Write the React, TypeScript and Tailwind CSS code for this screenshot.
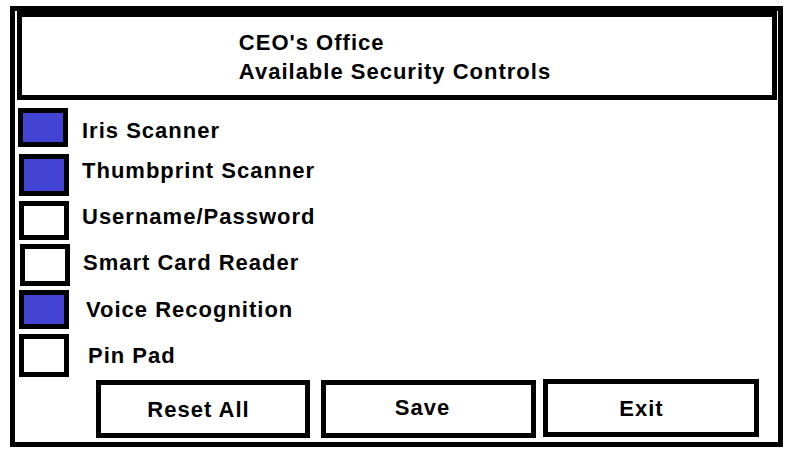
import React from "react";

const font = { fontFamily: '"Liberation Sans", Arial, Helvetica, sans-serif' };

type Row = { label: string; checked: boolean; h: string; mt: string; ml: string; lx: string; lpad: string };

const rows: Row[] = [
  { label: "Iris Scanner", checked: true, h: "h-[39px]", mt: "mt-[8px]", ml: "ml-[3px]", lx: "ml-[14px]", lpad: "pt-[7px]" },
  { label: "Thumbprint Scanner", checked: true, h: "h-[42px]", mt: "mt-[7px]", ml: "ml-[4px]", lx: "ml-[13px]", lpad: "pb-[8px]" },
  { label: "Username/Password", checked: false, h: "h-[39px]", mt: "mt-[5px]", ml: "ml-[4px]", lx: "ml-[13px]", lpad: "pb-[7px]" },
  { label: "Smart Card Reader", checked: false, h: "h-[42px]", mt: "mt-[4px]", ml: "ml-[5px]", lx: "ml-[13px]", lpad: "pb-[4px]" },
  { label: "Voice Recognition", checked: true, h: "h-[39px]", mt: "mt-[4px]", ml: "ml-[4px]", lx: "ml-[17px]", lpad: "pb-[0px]" },
  { label: "Pin Pad", checked: false, h: "h-[43px]", mt: "mt-[5px]", ml: "ml-[4px]", lx: "ml-[19px]", lpad: "pb-[0px]" },
];

export default function App() {
  return (
    <div className="w-[792px] h-[453px] bg-white pt-[6px] pl-[10px] text-black" style={font}>
      <div className="w-[773px] h-[441px] border-[5px] border-black box-border flex flex-col">
        <div className="ml-[2px] mr-[1px] h-[89px] border-[5px] border-t-[6px] border-black flex items-center justify-center">
          <div className="text-[22px] font-bold tracking-[1px] leading-[29px] mt-[1px] mr-[4px]">
            <div>CEO's Office</div>
            <div>Available Security Controls</div>
          </div>
        </div>
        {rows.map((r) => (
          <div key={r.label} className={`flex items-center ${r.mt}`}>
            <div
              className={`${r.ml} ${r.h} w-[50px] border-[5px] border-black ${r.checked ? "bg-[#4444d4]" : "bg-white"}`}
            />
            <div className={`${r.lx} ${r.lpad} text-[22px] font-bold tracking-[1px] leading-[26px]`}>{r.label}</div>
          </div>
        ))}
        <div className="flex mt-[3px] ml-[81px]">
          <div className="w-[214px] h-[58px] border-[5px] border-black flex items-center justify-center pr-[9px] text-[22px] font-bold tracking-[1px]">
            Reset All
          </div>
          <div className="ml-[11px] w-[215px] h-[58px] border-[5px] border-black flex items-center justify-center pr-[12px] pb-[4px] text-[22px] font-bold tracking-[1px]">
            Save
          </div>
          <div className="ml-[7px] w-[216px] h-[58px] -mt-[1px] border-[5px] border-black flex items-center justify-center pr-[19px] text-[22px] font-bold tracking-[1px]">
            Exit
          </div>
        </div>
      </div>
    </div>
  );
}
